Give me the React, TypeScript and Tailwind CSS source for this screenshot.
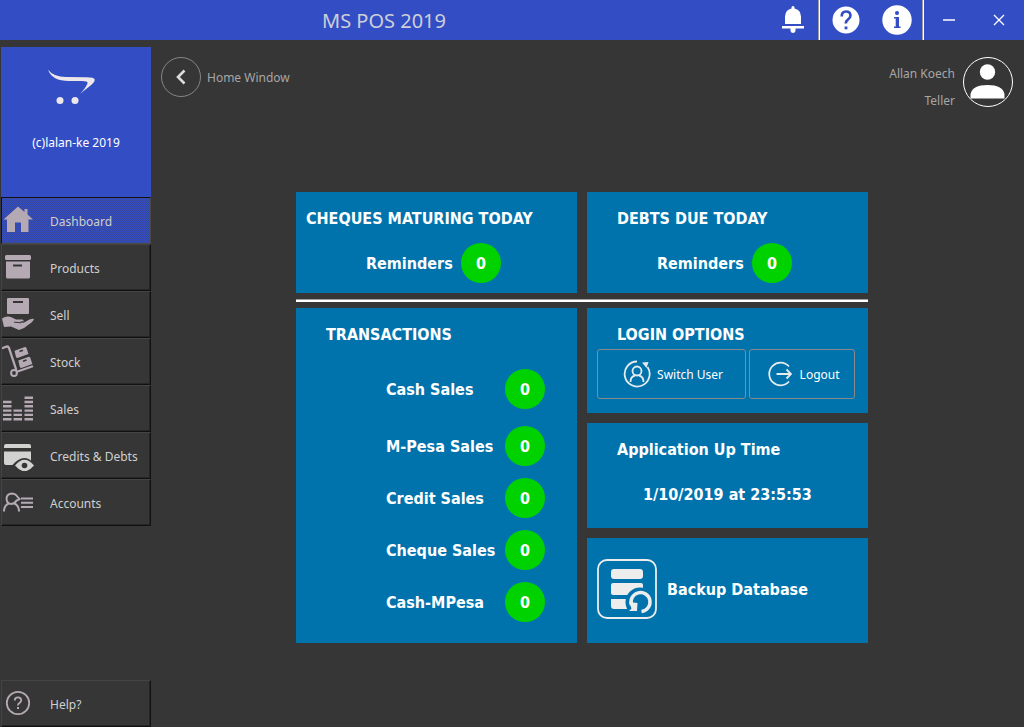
import type { ReactNode } from "react";

const reminderCards = [
  { title: "CHEQUES MATURING TODAY", count: 0, headingClass: "pl-[10px]" },
  { title: "DEBTS DUE TODAY", count: 0, headingClass: "pl-[30px]" },
];

const transactions = [
  { label: "Cash Sales", count: 0 },
  { label: "M-Pesa Sales", count: 0 },
  { label: "Credit Sales", count: 0 },
  { label: "Cheque Sales", count: 0 },
  { label: "Cash-MPesa", count: 0 },
];

function MenuIcon({ children }: { children: ReactNode }) {
  return (
    <svg aria-hidden="true" viewBox="0 0 32 32" className="relative mb-[2px] size-8 shrink-0" fill="#b5aab3">
      {children}
    </svg>
  );
}

const menu = [
  {
    label: "Dashboard",
    icon: (
      <path d="M16 2.500 1.500 15.500H5V28h8v-9.500h6V28h7.500V15.500H31L25.500 10.500V5h-3v3z" />
    ),
  },
  {
    label: "Products",
    icon: (
      <>
        <rect x="3" y="4" width="26" height="5" rx="1.500" />
        <path fillRule="evenodd" d="M4 10.500h24V26q0 1.500-1.500 1.500h-21Q4 27.500 4 26zM11 13.500v2h9v-2z" />
      </>
    ),
  },
  {
    label: "Sell",
    icon: (
      <>
        <path fillRule="evenodd" d="M5 1q0-1 1-1h20q1 0 1 1v14q0 1-1 1H6q-1 0-1-1zM11 3v2h10V3z" />
        <path d="M0 20.500Q5 17 10 19.500l4 2h6.500q2.500 1.500 0 3l-6.500.3q7 1.200 10-1.300 4.500-3.500 8-2.500-1 3-6 6-4 4-9 5l-8-3.500-7 .5z" />
        <path d="M12 24.200q6 1 9.500-.8" fill="none" stroke="#363636" strokeWidth="1" />
      </>
    ),
  },
  {
    label: "Stock",
    icon: (
      <>
        <path d="M.8 3 5 1.500q1.500 0 2 1.500l7 21" fill="none" stroke="#b5aab3" strokeWidth="2.300" strokeLinecap="round" />
        <path d="m15.500 26.500 14.500-5" stroke="#b5aab3" strokeWidth="2.300" strokeLinecap="round" />
        <circle cx="12" cy="28" r="2.900" fill="none" stroke="#b5aab3" strokeWidth="2" />
        <path d="m12.500 5.700 10.500-3.800q1 0 1.500 1L26.500 9l-11 4q-1 0-1.500-1z" />
        <path d="m16.300 15.500 10.500-3.800q1 0 1.500 1l2 6.300-11 4q-1 0-1.500-1z" />
        <path d="m17.500 6.500 3.500-1.200M21 16.200l3.500-1.200" stroke="#363636" strokeWidth="1.500" />
      </>
    ),
  },
  {
    label: "Sales",
    icon: (
      <path
        d="M1 10h8.500M1 14.300h8.500M1 18.600h8.500M1 22.900h8.500M1 27.200h8.500M11.500 18.600H20M11.500 22.900H20M11.500 27.200H20M22.500 5.700h8.500M22.500 10h8.500M22.500 14.300h8.500M22.500 18.600h8.500M22.500 22.900h8.500M22.500 27.200h8.500"
        stroke="#b5aab3"
        strokeWidth="2.400"
      />
    ),
  },
  {
    label: "Credits & Debts",
    icon: (
      <g fill="#d2d2d0">
        <path d="M2 9V7q0-2 2-2h23q2 0 2 2v2zM2 12.500h27V26H4q-2 0-2-2z" />
        <path d="M10 26.500q12.500-15 24 0-11.500 14-24 0z" fill="#363636" />
        <path d="M13 26.500q9.500-11.500 19 0-9.500 11.500-19 0z" />
        <circle cx="22.500" cy="26.500" r="2.800" fill="#363636" />
      </g>
    ),
  },
  {
    label: "Accounts",
    icon: (
      <g fill="none" stroke="#b5aab3" strokeWidth="2">
        <path d="M14 9Q12.500 7.500 9.500 7.500 4.500 8 4.500 13q.5 5 5 5 3.500-.5 5-3.500 2-.5 3-1.500-1.500-1.500-3.500-4z" />
        <path d="M2 25.500q0-6.500 5-8M17 25.500q0-6.500-5-8M19 12.500h12M19 16.800h12M19 21h12" />
      </g>
    ),
  },
];

function DitheredFill() {
  return (
    <svg aria-hidden="true" className="absolute inset-0 size-full" shapeRendering="crispEdges">
      <defs>
        <pattern id="dither" width="2" height="2" patternUnits="userSpaceOnUse">
          <rect width="2" height="2" fill="#334dc4" />
          <rect width="1" height="1" fill="#37479c" />
          <rect x="1" y="1" width="1" height="1" fill="#37479c" />
        </pattern>
      </defs>
      <rect width="100%" height="100%" fill="url(#dither)" />
    </svg>
  );
}

function SidebarButton({ label, active = false, children }: { label: string; active?: boolean; children: ReactNode }) {
  return (
    <button
      type="button"
      aria-current={active ? "page" : undefined}
      className={
        "relative flex h-[47px] w-full items-center gap-4 border text-left text-[12px] text-[#cfcfcf] " +
        (active
          ? "border-[#484848] border-t-[#111111] border-l-[#111111]"
          : "border-[#111111] border-t-[#444444] border-l-[#444444] shadow-[inset_-1px_-1px_#262626]")
      }
    >
      {active && <DitheredFill />}
      <MenuIcon>{children}</MenuIcon>
      <span className="relative pt-[2px]">{label}</span>
    </button>
  );
}

function Badge({ count }: { count: number }) {
  return (
    <span className="flex size-10 items-center justify-center rounded-full bg-[#00d200] pt-[2px]">{count}</span>
  );
}

function HeaderButton({ label, wide = false, children }: { label: string; wide?: boolean; children: ReactNode }) {
  return (
    <button
      type="button"
      aria-label={label}
      className={"flex h-10 items-center justify-center " + (wide ? "w-[51px]" : "w-[50px]")}
    >
      {children}
    </button>
  );
}

function Divider() {
  return <div className="w-[2px] shrink-0 border-l border-[#a0a0a0] bg-white" />;
}

export default function App() {
  return (
    <div className="flex min-h-screen flex-col bg-[#363636] font-['Noto_Sans','Liberation_Sans',sans-serif] text-[12px]">
      <header className="flex h-10 bg-[#334dc4]">
        <h1 className="flex flex-1 items-center justify-center pt-[2px] text-[20px] text-[#cdd0d8]">MS POS 2019</h1>
        <HeaderButton label="Notifications">
          <svg viewBox="0 0 24 28" className="h-7 w-6" fill="#fff">
            <path d="M10.500 2.500V1.500q0-1.500 1.500-1.500t1.500 1.500v1q6 1 6.500 8V18H4v-7.500q.5-7 6.500-8zM1 20h22v2.500h-8.500V25Q14 27 12 27t-2.500-2v-2.500H1z" />
          </svg>
        </HeaderButton>
        <Divider />
        <HeaderButton label="Help" wide>
          <svg viewBox="0 0 28 28" className="size-7">
            <circle cx="14" cy="14" r="13.500" fill="#fff" />
            <path d="M9.700 10.500q0-5 4.300-5t4.500 4q0 2-2.500 4t-2 4" fill="none" stroke="#334dc4" strokeWidth="2.600" />
            <rect x="12.600" y="20.500" width="2.800" height="2.800" fill="#334dc4" />
          </svg>
        </HeaderButton>
        <HeaderButton label="Information" wide>
          <svg viewBox="0 0 30 30" className="size-[30px]">
            <circle cx="15" cy="15" r="14.700" fill="#fff" />
            <circle cx="15" cy="8" r="2" fill="#334dc4" />
            <path d="M12 12h5v9.500h1.500V23H12v-1.500h1.700v-8H12z" fill="#334dc4" />
          </svg>
        </HeaderButton>
        <Divider />
        <HeaderButton label="Minimize">
          <svg viewBox="0 0 12 12" className="size-3">
            <path d="M0 6h12" stroke="#fff" strokeWidth="1.500" />
          </svg>
        </HeaderButton>
        <HeaderButton label="Close">
          <svg viewBox="0 0 12 12" className="size-3">
            <path d="m1 1 10 10M11 1 1 11" stroke="#fff" strokeWidth="1.300" />
          </svg>
        </HeaderButton>
      </header>

      <div className="flex flex-1">
        <aside className="ml-px flex w-[150px] shrink-0 flex-col pt-[7px]">
          <div className="flex h-[150px] flex-col items-center bg-[#334dc4] pt-[22px] text-white">
            <svg aria-hidden="true" viewBox="0 0 48 36" className="mr-2 h-9 w-12" fill="#ebe7ea">
              <path d="M0 .8Q5.500 8 18 8l20 .2q8-.1 8.700 2.300.5 3-7 8.200L32 25q3-3 5-6 2.800-4.500 2.500-5.500-.4-1.600-5.500-1.500H21Q4 12 0 .8z" />
              <circle cx="12" cy="31.500" r="3.500" />
              <circle cx="27" cy="31.500" r="3.500" />
            </svg>
            <p className="mt-[29px]">(c)lalan-ke 2019</p>
          </div>
          <nav>
            {menu.map((item, index) => (
              <SidebarButton key={item.label} label={item.label} active={index === 0}>
                {item.icon}
              </SidebarButton>
            ))}
          </nav>
          <div className="mt-auto">
            <SidebarButton label="Help?">
              <circle cx="16" cy="16" r="11.200" fill="none" stroke="#b5aab3" strokeWidth="1.800" />
              <path d="M12.800 13.500q0-3.200 3.200-3.200t3.200 3q0 1.500-1.700 2.700T16 18.500" fill="none" stroke="#b5aab3" strokeWidth="1.800" />
              <rect x="15" y="20" width="2" height="2" />
            </SidebarButton>
          </div>
        </aside>

        <main className="flex flex-1 flex-col pr-[11px] pl-[10px] text-[#a6a6a6]">
          <div className="flex items-start justify-between pt-[17px]">
            <div className="flex items-center gap-[6px]">
              <button type="button" aria-label="Back" className="flex size-10 items-center justify-center rounded-full border border-[#868686]">
                <svg viewBox="0 0 10 16" className="h-4 w-[10px]">
                  <path d="M8.500 1.500 2 8l6.500 6.500" fill="none" stroke="#dcdcdc" strokeWidth="2.600" />
                </svg>
              </button>
              <span className="pt-[2px]">Home Window</span>
            </div>
            <div className="flex items-start gap-2">
              <div className="flex flex-col gap-[9px] pt-2 text-right leading-[18px]">
                <span>Allan Koech</span>
                <span>Teller</span>
              </div>
              <svg role="img" aria-label="Profile picture" viewBox="0 0 50 50" className="size-[50px]">
                <circle cx="25" cy="25" r="24.500" fill="none" stroke="#fff" />
                <circle cx="24.500" cy="15" r="7.700" fill="#fff" />
                <path d="M7.500 41.500V37q2-9 17-9t17 9v4.500z" fill="#fff" />
              </svg>
            </div>
          </div>

          <div className="flex flex-1 flex-col items-center justify-center pr-[10px] pb-[2px]">
            <div className="w-full max-w-[572px] font-['DejaVu_Sans_Condensed','DejaVu_Sans',sans-serif] text-[16px] leading-6 font-bold text-white">
              <div className="grid grid-cols-2 gap-[10px]">
                {reminderCards.map((card) => (
                  <section key={card.title} className="bg-[#0073ad] pt-[15px] pb-[10px]">
                    <h2 className={card.headingClass}>{card.title}</h2>
                    <div className="mt-3 flex items-center pl-[70px]">
                      <span className="w-[95px] pt-[2px]">Reminders</span>
                      <Badge count={card.count} />
                    </div>
                  </section>
                ))}
              </div>

              <hr className="my-[6px] h-[3px] border-t border-[#a0a0a0] bg-white" />

              <div className="grid grid-cols-2 gap-[10px]">
                <section className="bg-[#0073ad] pt-[15px]">
                  <h2 className="pl-[30px]">TRANSACTIONS</h2>
                  <ul className="mt-[22px] flex flex-col gap-3 pl-[90px]">
                    {transactions.map((row) => (
                      <li key={row.label} className="flex items-center first:mb-[5px]">
                        <span className="w-[119px] pt-[2px]">{row.label}</span>
                        <Badge count={row.count} />
                      </li>
                    ))}
                  </ul>
                </section>

                <div className="flex flex-col gap-[10px]">
                  <section className="h-[105px] bg-[#0073ad] pt-[15px]">
                    <h2 className="pl-[30px]">LOGIN OPTIONS</h2>
                    <div className="mt-[2px] flex gap-[3px] pr-[13px] pl-[10px] font-['Noto_Sans','Liberation_Sans',sans-serif] text-[12px] font-normal">
                      <button type="button" className="flex h-[50px] flex-[10] items-center justify-center gap-[6px] rounded-[3px] border border-[#858a8e] pl-[3px]">
                        <svg aria-hidden="true" viewBox="0 0 28 28" className="size-7 shrink-0" fill="none" stroke="#e6ebee" strokeWidth="1.800">
                          <path d="M14 1.500A12.500 12.500 0 1 0 24.500 7" />
                          <path d="m19 2.500 6.500-.5-2 6z" fill="#e6ebee" stroke="none" />
                          <circle cx="14" cy="11" r="4.500" />
                          <path d="M7.500 22q0-5.500 4.500-6.500M20.500 22q0-5.500-4.500-6.500" />
                        </svg>
                        <span className="pt-[2px]">Switch User</span>
                      </button>
                      <button type="button" className="flex h-[50px] flex-[7] items-center justify-center gap-2 rounded-[3px] border border-[#858a8e] pl-[3px]">
                        <svg aria-hidden="true" viewBox="0 0 24 26" className="h-[26px] w-6 shrink-0" fill="none" stroke="#e6ebee" strokeWidth="1.800">
                          <path d="M21 5.500A11.300 11.300 0 1 0 21 20.500M8.500 13H23M18.500 8.500 23 13l-4.500 4.500" />
                        </svg>
                        <span className="pt-[2px]">Logout</span>
                      </button>
                    </div>
                  </section>

                  <section className="h-[105px] bg-[#0073ad] pt-[15px]">
                    <h2 className="pl-[30px]">Application Up Time</h2>
                    <p className="mt-[21px] pl-[56px]">1/10/2019 at 23:5:53</p>
                  </section>

                  <section className="flex h-[105px] items-center bg-[#0073ad] px-[10px] pb-[3px]">
                    <button type="button" className="flex items-center gap-[10px]">
                      <svg aria-hidden="true" viewBox="0 0 60 60" className="size-[60px]" fill="#ededed">
                        <rect x="1" y="1" width="58" height="58" rx="9" fill="none" stroke="#ededed" strokeWidth="1.800" />
                        <rect x="14" y="10" width="32" height="10" rx="3" />
                        <path d="M16 24h28q2 0 2 2v10H16q-2 0-2-2v-8q0-2 2-2zM14 40h20v10H17q-3 0-3-3z" />
                        <circle cx="43" cy="43" r="14.500" fill="#0073ad" />
                        <path d="M44.500 52.500A9.500 9.500 0 1 0 34.500 46" fill="none" stroke="#ededed" strokeWidth="3.500" />
                        <path d="m32 43 8.500 1-.5 8h-8l2.500-2.500z" />
                      </svg>
                      <span className="pt-[2px]">Backup Database</span>
                    </button>
                  </section>
                </div>
              </div>
            </div>
          </div>
        </main>
      </div>
    </div>
  );
}
